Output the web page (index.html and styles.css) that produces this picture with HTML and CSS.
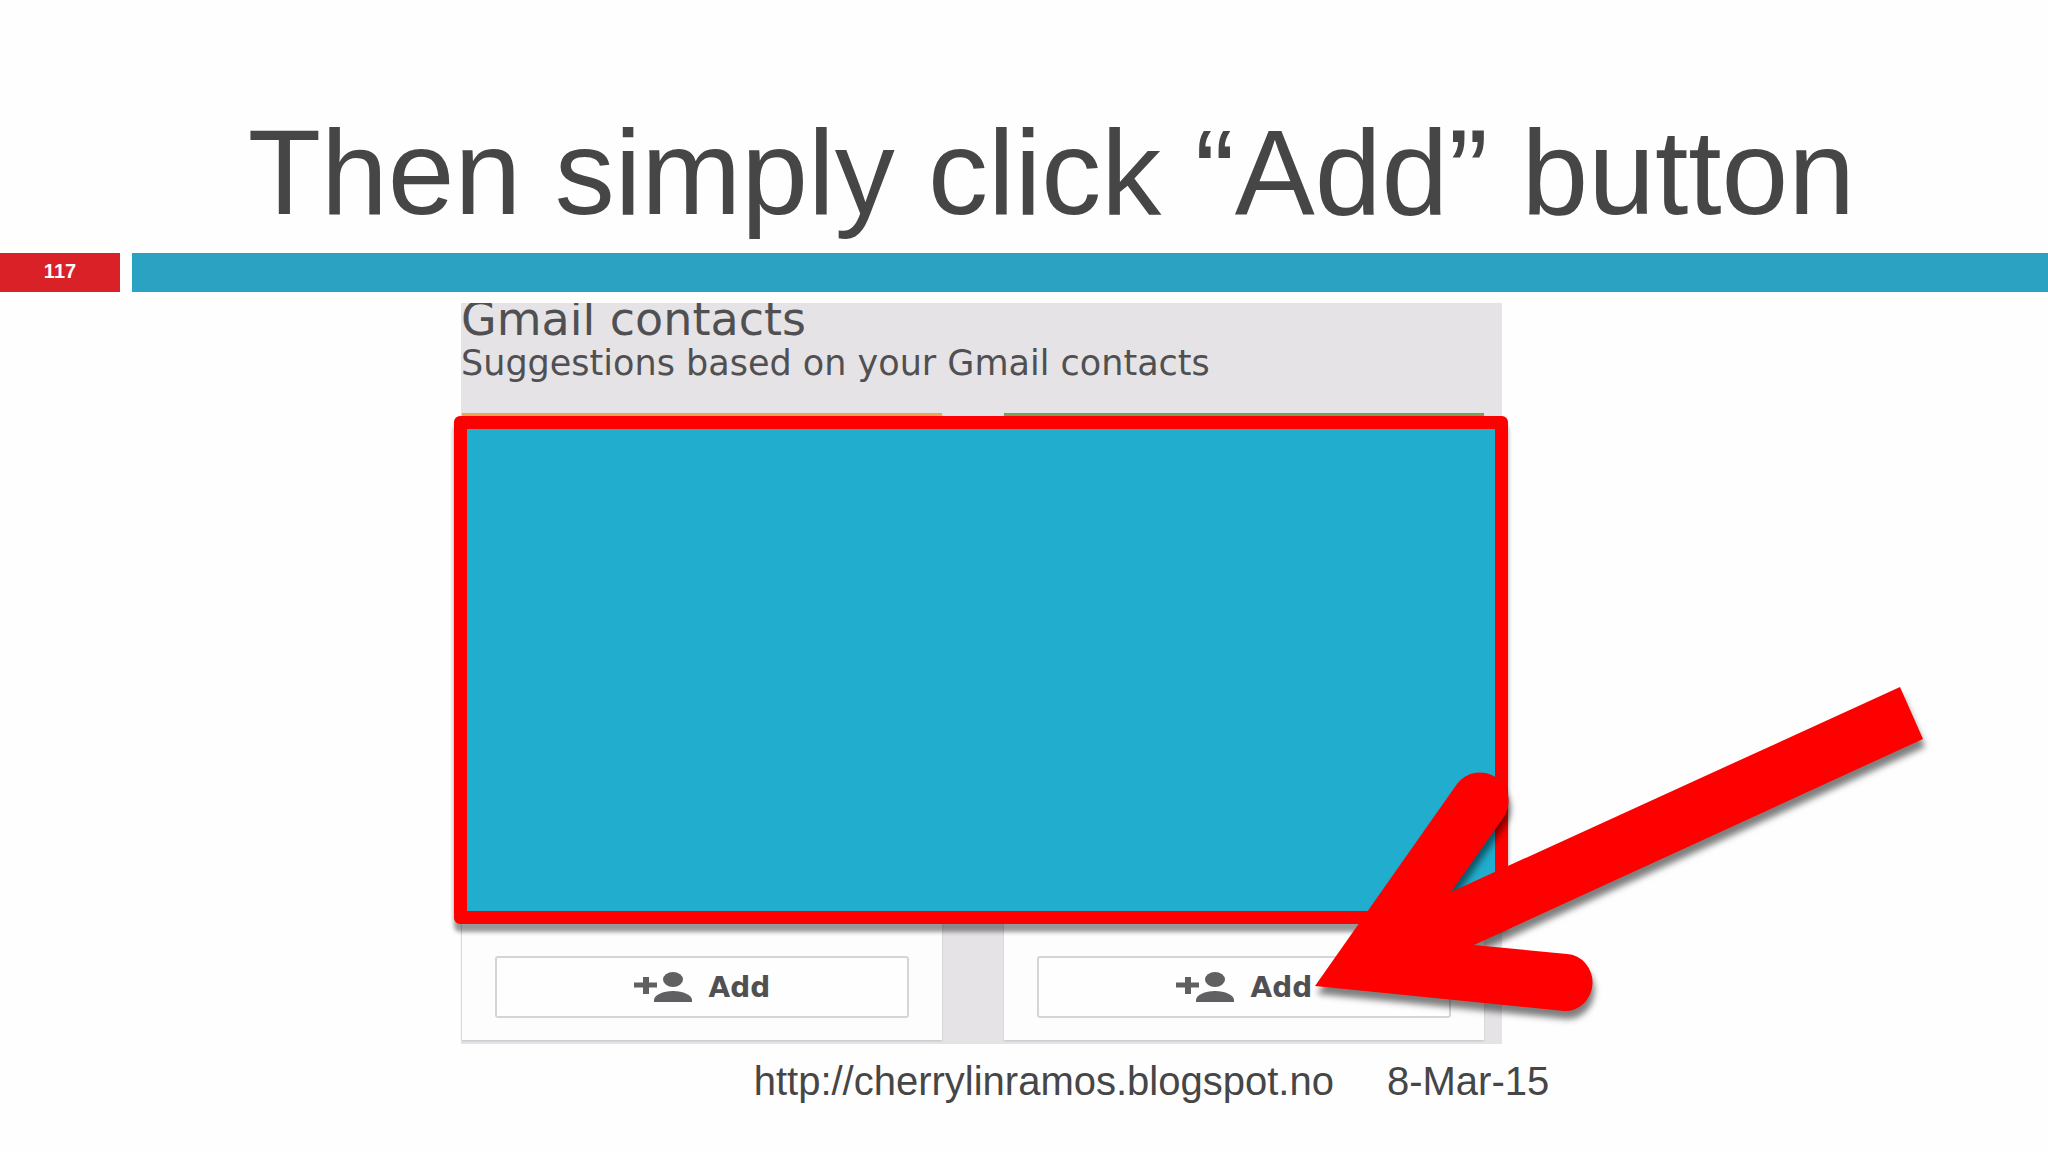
FILE: index.html
```html
<!DOCTYPE html>
<html lang="en">
  <head>
    <meta charset="utf-8">
    <title>Then simply click “Add” button</title>
    <link rel="stylesheet" href="styles.css">
  </head>
  <body>
    <header>
      <h1>Then simply click “Add” button</h1>
    </header>

    <div class="band">
      <div class="number">117</div>
      <div class="bar"></div>
    </div>

    <main>
      <section class="contacts">
        <div class="intro">
          <h2>Gmail contacts</h2>
          <p>Suggestions based on your Gmail contacts</p>
        </div>

        <div class="cards">
          <div class="card orange">
            <button type="button">
              <svg class="icon" viewBox="0 0 60 30" aria-hidden="true">
                <path d="M0 10.500h9V5h6v5.500h8v5h-8V22H9v-6.500H0z"/>
                <ellipse cx="39" cy="7.500" rx="10" ry="7.500"/>
                <path d="M20 30v-2c0-5 9-9 19-9s19 4 19 9v2z"/>
              </svg>
              Add
            </button>
          </div>
          <div class="card green">
            <button type="button">
              <svg class="icon" viewBox="0 0 60 30" aria-hidden="true">
                <path d="M0 10.500h9V5h6v5.500h8v5h-8V22H9v-6.500H0z"/>
                <ellipse cx="39" cy="7.500" rx="10" ry="7.500"/>
                <path d="M20 30v-2c0-5 9-9 19-9s19 4 19 9v2z"/>
              </svg>
              Add
            </button>
          </div>
        </div>

        <div class="cover"></div>

        <!-- arrow pointing at the second Add button -->
        <svg class="arrow" viewBox="0 0 610 326" aria-hidden="true">
          <path d="M586 1L137 206L189 132A28.500 28.500 0 0 0 143 98L1 300L250 325A27 28.500 0 0 0 253 268L160 259L609 53Z"/>
        </svg>
      </section>
    </main>

    <footer>
      <a href="http://cherrylinramos.blogspot.no">http://cherrylinramos.blogspot.no</a>
      <span>8-Mar-15</span>
    </footer>
  </body>
</html>
```
FILE: styles.css
```css
body{
  margin:0;
  background:#fefefe;
  color:#464646;
  font-family:"Liberation Sans", Arial, sans-serif;
}
header{
  padding:104px 0 13px 12.1%;
}
h1{
  margin:0;
  font-size:120px;
  font-weight:normal;
  line-height:136px;
  white-space:nowrap;
}

/* slide number and coloured strip */
.band{
  display:flex;
  gap:12px;
  height:39px;
  margin-bottom:11px;
}
.number{
  width:120px;
  background:#da2128;
  color:#fff;
  font-size:20px;
  font-weight:bold;
  line-height:36px;
  text-align:center;
}
.bar{
  flex:1;
  background:#2ba2c1;
}

main{
  display:grid;
  grid-template-columns:461fr 1041fr 546fr;
}
.contacts{
  position:relative;
  grid-column:2;
  padding-bottom:4px;
  background:#e5e3e6;
  font-family:"DejaVu Sans", sans-serif;
}
.intro{
  height:110px;
  overflow:hidden;
  color:#505052;
  white-space:nowrap;
}
.intro h2{
  margin:0;
  font-size:46px;
  font-weight:normal;
  line-height:32px;
}
.intro p{
  margin:0;
  font-size:35px;
  line-height:56px;
}
.cards{
  display:grid;
  grid-template-columns:1fr 1fr;
  gap:62px;
  padding:0 18px 0 1px;
}
.card{
  display:flex;
  flex-direction:column;
  justify-content:flex-end;
  box-sizing:border-box;
  height:627px;
  padding:0 33px 22px;
  border-top:3px solid;
  background:#fefdfe;
  box-shadow:0 1px 2px #c4c2c6;
}
.orange{
  border-color:#e9a94a;
}
.green{
  border-color:#79a352;
}
.card button{
  display:flex;
  align-items:center;
  justify-content:center;
  gap:15px;
  height:62px;
  padding:0;
  border:2px solid #d6d4d7;
  border-radius:3px;
  background:#fefefe;
  color:#505052;
  font:bold 28px "DejaVu Sans", sans-serif;
}
.icon{
  width:60px;
  height:30px;
  fill:#606062;
}

/* hides the people on the cards */
.cover{
  position:absolute;
  top:113px;
  left:-7px;
  right:-6px;
  box-sizing:border-box;
  height:508px;
  border:13px solid #f00;
  border-radius:6px;
  background:#20adce;
  box-shadow:0 8px 4px rgba(0,0,0,.4);
}
.arrow{
  position:absolute;
  top:383px;
  left:853px;
  width:610px;
  height:326px;
  overflow:visible;
  fill:#f00;
  filter:drop-shadow(2px 8px 3px rgba(0,0,0,.5));
}

footer{
  display:flex;
  gap:53px;
  padding:14px 0 0 36.8%;
  font-size:40px;
  line-height:46px;
  white-space:nowrap;
}
footer a{
  color:inherit;
  text-decoration:none;
}
```
